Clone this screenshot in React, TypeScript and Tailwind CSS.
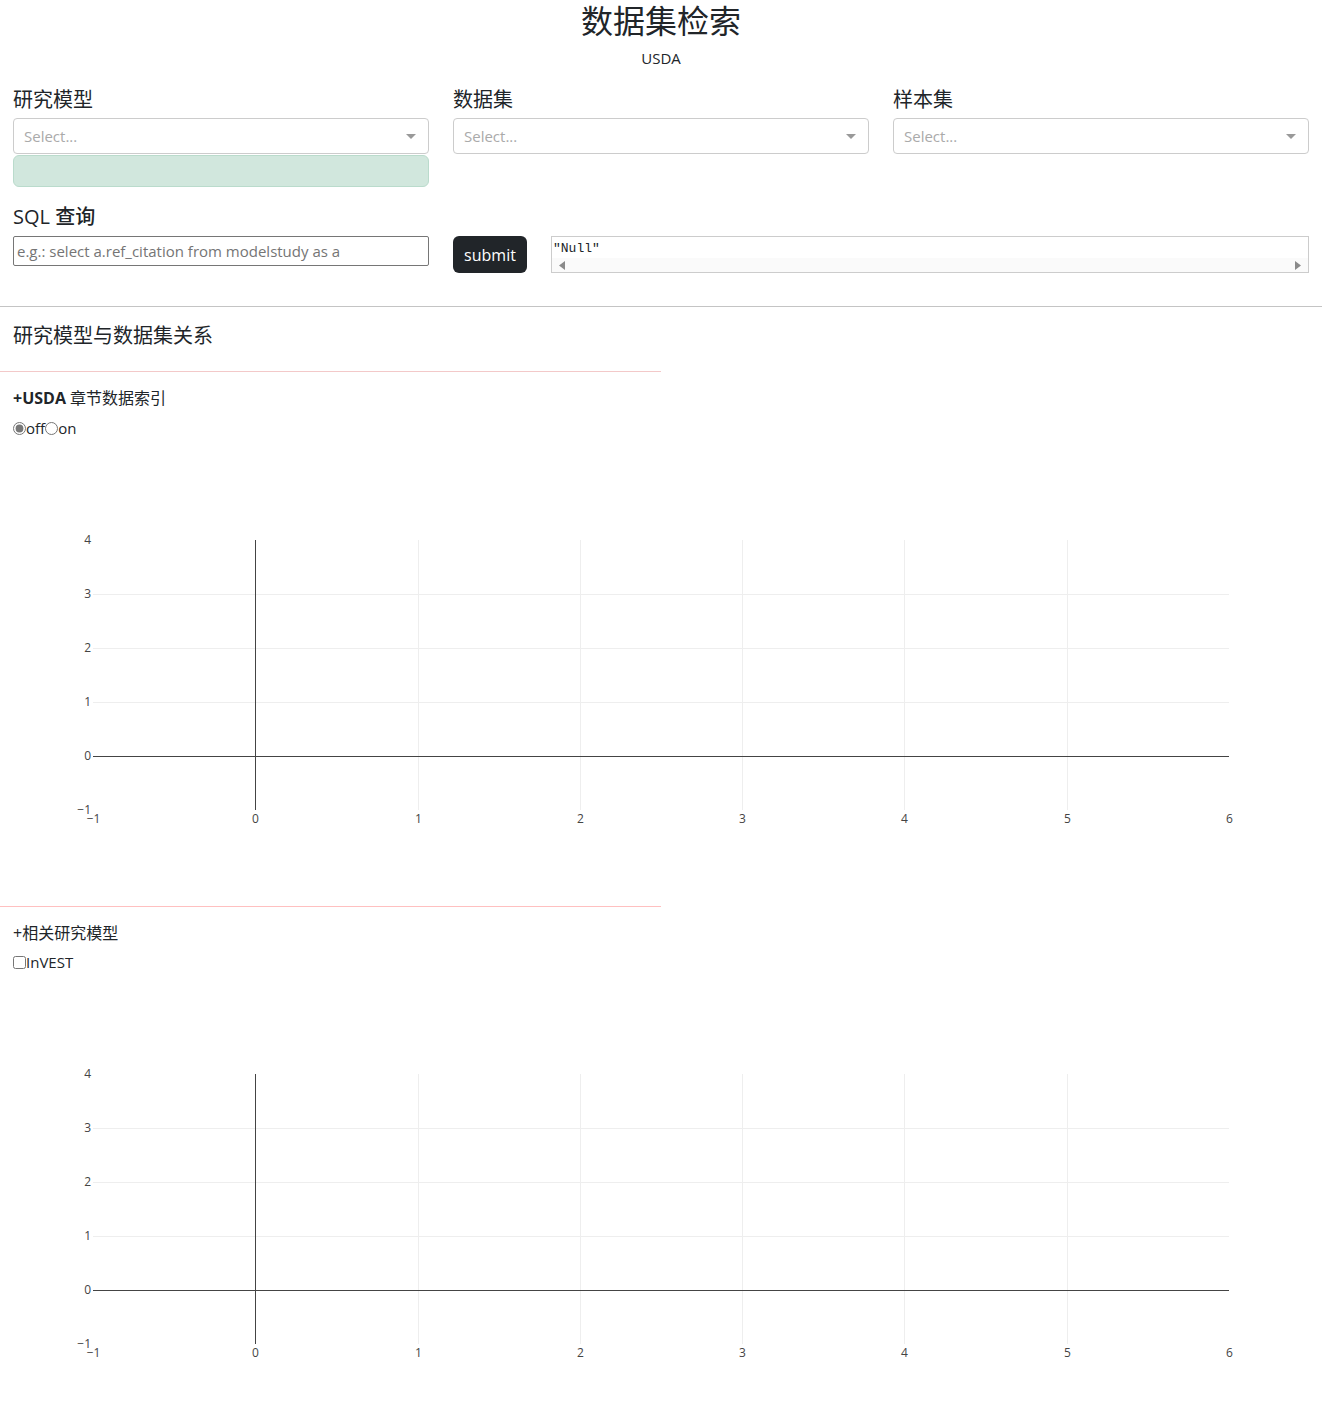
const FONT = "font-['Open_Sans','Noto_Sans_CJK_SC',sans-serif]";

const Select = () => (
  <div className="flex h-[36px] items-center justify-between rounded-[4px] border border-[#cccccc] bg-white pl-[10px] pr-[12px]">
    <span className="text-[15px] text-[#aaaaaa]">Select...</span>
    <svg width="10" height="6" viewBox="0 0 10 6" className="mt-[1px]">
      <path d="M0 0 L10 0 L5 5 Z" fill="#999999" />
    </svg>
  </div>
);

const xTicks = [-1, 0, 1, 2, 3, 4, 5, 6];
const yTicks = [4, 3, 2, 1, 0, -1];

const EmptyChart = () => {
  const left = 80;
  const top = 100;
  const w = 1136;
  const h = 270;
  const xs = (v: number) => Math.round(left + ((v + 1) / 7) * w) + 0.5;
  const ys = (v: number) => Math.round(top + ((4 - v) / 5) * h) + 0.5;
  return (
    <svg width="1296" height="450" className="ml-[13px] block" shapeRendering="crispEdges">
      {/* grid */}
      {[1, 2, 3, 4, 5].map((v) => (
        <line key={"gx" + v} x1={xs(v)} x2={xs(v)} y1={top} y2={top + h} stroke="#eeeeee" />
      ))}
      {[1, 2, 3].map((v) => (
        <line key={"gy" + v} x1={left} x2={left + w} y1={ys(v)} y2={ys(v)} stroke="#eeeeee" />
      ))}
      {/* zero lines */}
      <line x1={left} x2={left + w} y1={ys(0)} y2={ys(0)} stroke="#444444" />
      <line x1={xs(0)} x2={xs(0)} y1={top} y2={top + h} stroke="#444444" />
      {/* tick labels */}
      {yTicks.map((v) => (
        <text
          key={"ty" + v}
          x={left - 2}
          y={ys(v) - 1}
          textAnchor="end"
          dominantBaseline="central"
          fontSize="12"
          fill="#444444"
          fontFamily="'Open Sans', sans-serif"
          shapeRendering="auto"
        >
          {v < 0 ? "−" + Math.abs(v) : v}
        </text>
      ))}
      {xTicks.map((v) => (
        <text
          key={"tx" + v}
          x={xs(v)}
          y={top + h + 8}
          textAnchor="middle"
          dominantBaseline="central"
          fontSize="12"
          fill="#444444"
          fontFamily="'Open Sans', sans-serif"
          shapeRendering="auto"
        >
          {v < 0 ? "−" + Math.abs(v) : v}
        </text>
      ))}
    </svg>
  );
};

export default function App() {
  return (
    <div className={`${FONT} h-[1424px] overflow-hidden bg-white text-[#212529]`}>
      {/* Header */}
      <h2 className="pt-[2px] text-center text-[32px] leading-[38px]">数据集检索</h2>
      <p className="mt-[8px] text-center text-[15px] leading-[21px]">USDA</p>

      {/* Dropdowns */}
      <div className="mt-[18px] grid grid-cols-3 gap-x-[24px] px-[13px]">
        <div>
          <h5 className="pt-[1px] text-[20px] leading-[24px]">研究模型</h5>
          <div className="mt-[6px]">
            <Select />
          </div>
          <div className="mt-[1px] h-[32px] rounded-[6px] border border-[#badbcc] bg-[#d1e7dd]" />
        </div>
        <div>
          <h5 className="pt-[1px] text-[20px] leading-[24px]">数据集</h5>
          <div className="mt-[6px]">
            <Select />
          </div>
        </div>
        <div>
          <h5 className="pt-[1px] text-[20px] leading-[24px]">样本集</h5>
          <div className="mt-[6px]">
            <Select />
          </div>
        </div>
      </div>

      {/* SQL */}
      <h5 className="mt-[18px] px-[13px] text-[20px] font-medium leading-[24px]">SQL 查询</h5>
      <div className="mt-[7px] grid grid-cols-[416px_74px_1fr] items-start gap-x-[24px] px-[13px]">
        <input
          className="h-[30px] w-full rounded-[2px] border border-[#767676] px-[3px] text-[15px] outline-none placeholder:text-[#757575]"
          placeholder="e.g.: select a.ref_citation from modelstudy as a"
        />
        <button className="h-[37px] rounded-[6px] bg-[#212529] text-[16px] text-white">submit</button>
        <div className="h-[37px] border border-[#cccccc] bg-white">
          <pre className="pl-[1px] pt-[2px] font-['Liberation_Mono',monospace] text-[13px] leading-[19px]">"Null"</pre>
          <div className="flex h-[14px] items-center justify-between bg-[#fafafa] px-[7px]">
            <svg width="6" height="9" viewBox="0 0 6 9">
              <path d="M6 0 L6 9 L0 4.5 Z" fill="#8a8a8a" />
            </svg>
            <svg width="6" height="9" viewBox="0 0 6 9">
              <path d="M0 0 L0 9 L6 4.5 Z" fill="#8a8a8a" />
            </svg>
          </div>
        </div>
      </div>

      <hr className="mt-[33px] border-t border-[#c4c4c4]" />

      {/* Relations */}
      <h5 className="mt-[17px] px-[13px] text-[20px] leading-[24px]">研究模型与数据集关系</h5>
      <hr className="mt-[23px] w-[661px] border-t border-[#f3c9c9]" />

      <div className="mt-[14px] px-[13px] text-[16px] leading-[24px]">
        <b>+USDA</b> 章节数据索引
      </div>
      <div className="mt-[6px] flex items-center px-[13px] text-[15px] leading-[24px]">
        <label className="flex items-center">
          <input type="radio" name="usda" defaultChecked className="m-0 h-[13px] w-[13px] accent-[#777777]" />
          <span>off</span>
        </label>
        <label className="flex items-center">
          <input type="radio" name="usda" className="m-0 h-[13px] w-[13px]" />
          <span>on</span>
        </label>
      </div>
      <EmptyChart />

      <hr className="mt-[16px] w-[661px] border-t border-[#ffc0c0]" />
      <div className="mt-[14px] px-[13px] text-[16px] leading-[24px]">+相关研究模型</div>
      <div className="mt-[5px] flex items-center px-[13px] text-[15px] leading-[24px]">
        <label className="flex items-center">
          <input type="checkbox" className="m-0 h-[13px] w-[13px]" />
          <span>InVEST</span>
        </label>
      </div>
      <EmptyChart />
    </div>
  );
}
